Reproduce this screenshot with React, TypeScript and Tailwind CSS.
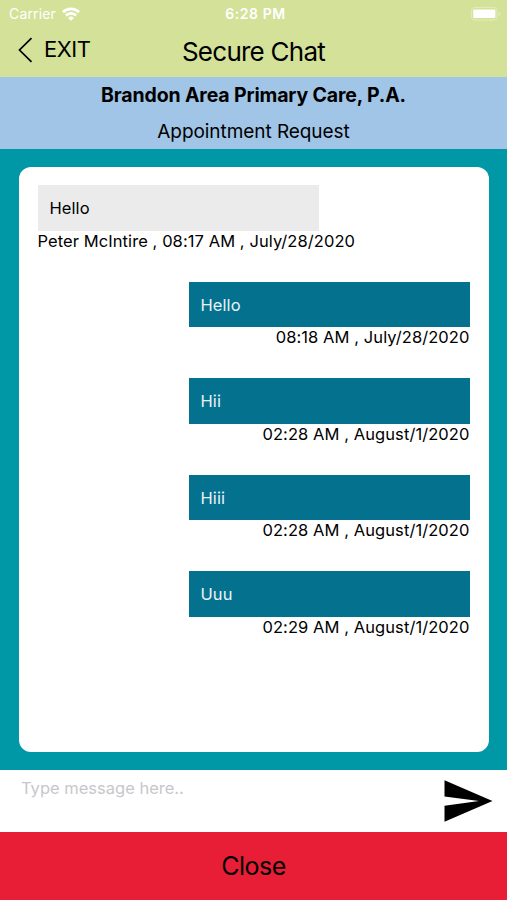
import { useState } from 'react';

type Message = {
  id: number;
  text: string;
  meta: string;
  mine: boolean;
};

const MESSAGES: Message[] = [
  { id: 1, text: 'Hello', meta: 'Peter McIntire , 08:17 AM , July/28/2020', mine: false },
  { id: 2, text: 'Hello', meta: '08:18 AM , July/28/2020', mine: true },
  { id: 3, text: 'Hii', meta: '02:28 AM , August/1/2020', mine: true },
  { id: 4, text: 'Hiii', meta: '02:28 AM , August/1/2020', mine: true },
  { id: 5, text: 'Uuu', meta: '02:29 AM , August/1/2020', mine: true },
];

function WifiIcon() {
  return (
    <svg width="18" height="14" viewBox="0 0 18 14" fill="none" stroke="white" strokeWidth="2.7">
      <path d="M1 5.2a11.3 11.3 0 0 1 16 0" />
      <path d="M3.9 8.5a7.2 7.2 0 0 1 10.2 0" />
      <path d="M9 13.8 6.1 10.9a4.1 4.1 0 0 1 5.8 0z" fill="white" stroke="none" />
    </svg>
  );
}

function BatteryIcon() {
  return (
    <svg width="31" height="14" viewBox="0 0 31 14">
      <rect x="0.5" y="0.5" width="25.5" height="12.5" rx="3" fill="none" stroke="white" strokeOpacity="0.35" />
      <rect x="2.2" y="2.5" width="22.2" height="8.5" rx="1.2" fill="white" />
      <path d="M27.5 4.7c2 .6 2 3.8 0 4.4z" fill="white" fillOpacity="0.35" />
    </svg>
  );
}

function StatusBar() {
  return (
    <div className="grid h-[27px] grid-cols-3 items-center pl-[9px] pr-[5px] text-[14px] leading-none text-white">
      <div className="flex items-center gap-[6px]">
        <span className="pt-px tracking-[0.15px]">Carrier</span>
        <WifiIcon />
      </div>
      <span className="text-center text-[14px] font-semibold tracking-[0.55px] whitespace-nowrap">6:28 PM</span>
      <div className="flex justify-end">
        <BatteryIcon />
      </div>
    </div>
  );
}

function Header() {
  return (
    <header className="h-[77px] bg-[#d4e199]">
      <StatusBar />
      <div className="grid h-[50px] grid-cols-[1fr_auto_1fr] items-center pl-[18px] pr-[18px]">
        <button className="flex items-center gap-[11px] pb-[5px] text-[22px] leading-none">
          <svg width="15" height="26" viewBox="0 0 15 26" fill="none" stroke="black" strokeWidth="1.7">
            <path d="M13.5 1.2 1.5 13l12 11.8" />
          </svg>
          <span className="pb-[2px] tracking-[-0.5px]">EXIT</span>
        </button>
        <h1 className="text-[26px] leading-none tracking-[-0.75px]">Secure Chat</h1>
      </div>
    </header>
  );
}

function Bubble({ message }: { message: Message }) {
  const { text, meta, mine } = message;
  return (
    <li className={`flex h-[96.5px] flex-col ${mine ? 'items-end' : 'items-start'}`}>
      <div
        className={`flex h-[45.5px] w-[281px] shrink-0 items-center px-3 pt-[2px] text-[16.5px] tracking-[0.08px] ${
          mine ? 'bg-[#04718f] text-[#e9f3f6]' : 'bg-[#ebebeb] text-black'
        }`}
      >
        {text}
      </div>
      <p className="text-[16.5px] leading-[20px] tracking-[0.08px] whitespace-nowrap">{meta}</p>
    </li>
  );
}

function App() {
  const [draft, setDraft] = useState('');

  return (
    <div className="flex h-[900px] w-[507px] flex-col overflow-hidden bg-white font-['Inter',sans-serif] text-black">
      <Header />
      <div className="flex h-[72px] flex-col items-center bg-[#a0c5e6]">
        <h2 className="text-[19.5px] leading-[37px] font-bold tracking-[-0.15px]">Brandon Area Primary Care, P.A.</h2>
        <p className="text-[19px] leading-[35px] tracking-[-0.06px]">Appointment Request</p>
      </div>
      <main className="h-[621px] bg-[#0098a6] px-[18.5px] py-[18px]">
        <ul className="h-[585px] overflow-hidden rounded-[12px] bg-white px-[19px] pt-[18px]">
          {MESSAGES.map((m) => (
            <Bubble key={m.id} message={m} />
          ))}
        </ul>
      </main>
      <div className="flex h-[61.5px] items-start pl-[21px] pr-[14px]">
        <textarea
          className="h-full flex-1 resize-none pt-[8px] text-[16.5px] leading-[20px] outline-none placeholder:text-[#c7c7cb]"
          placeholder="Type message here.."
          value={draft}
          onChange={(e) => setDraft(e.target.value)}
        />
        <button className="pt-[10px]" aria-label="Send">
          <svg width="49" height="42" viewBox="0 0 49 42">
            <path d="M0.5 0.3 48.5 21 0.5 41.7V25.8L35 21 0.5 16.4z" fill="black" />
          </svg>
        </button>
      </div>
      <button className="flex-1 bg-[#e81e36] pt-[2px] text-[25px] leading-none tracking-[-0.5px]">Close</button>
    </div>
  );
}

export default App;
